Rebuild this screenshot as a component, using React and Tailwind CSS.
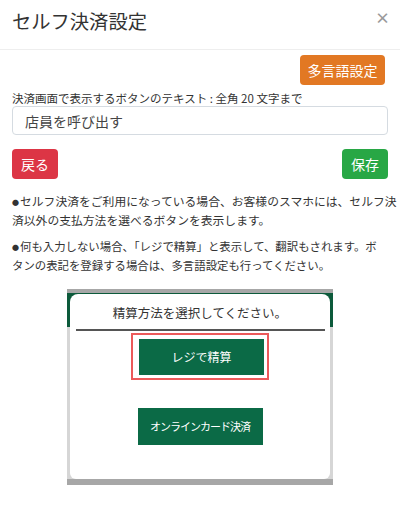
import React from 'react';

const font = { fontFamily: '"Noto Sans CJK JP", "Noto Sans", sans-serif' };

function Bullet() {
  return <span className="mr-[1px] inline-block align-[1px] text-[7px]">●</span>;
}

function PaymentPreview() {
  return (
    <div className="mx-auto mt-[15px] w-[266px] h-[196px] border-t-[4px] border-b-[6px] border-[#a7a7a7] bg-[linear-gradient(#0c5a3b_0_34px,#d6d6d6_34px)] px-[3px] pt-[1px]">
      <div className="h-full rounded-t-[8px] rounded-b-[6px] bg-white pt-[9px]">
        <p className="text-center text-[12.5px] leading-[20px] text-[#333]">精算方法を選択してください。</p>
        <div className="mt-[6px] ml-[6px] mr-[5px] h-[2px] bg-[#555]" />
        <div className="mx-auto mt-[2px] flex h-[47px] w-[138px] items-center justify-center border-2 border-[#ec5a5a] pl-[3px]">
          <div className="flex h-[36px] w-[125px] items-center justify-center bg-[#0b6a46] text-[12px] text-white">
            レジで精算
          </div>
        </div>
        <div className="mx-auto mt-[28px] flex h-[37px] w-[125px] items-center justify-center bg-[#0b6a46] text-[11px] tracking-[-1px] text-white">
          オンラインカード決済
        </div>
      </div>
    </div>
  );
}

export default function App() {
  return (
    <div className="w-[400px] h-[505px] overflow-hidden bg-white text-[#333]" style={font}>
      <div className="flex h-[50px] items-center justify-between border-b border-[#eeeeee] pl-3 pr-[10px]">
        <h1 className="text-[19.3px] leading-none -mt-[5px]">セルフ決済設定</h1>
        <span className="-mt-[12px] text-[15px] font-bold text-[#9a9a9a]">×</span>
      </div>

      <div className="px-3 pt-[5px]">
        <div className="flex justify-end">
          <button className="mr-[3px] h-[30px] w-[85px] rounded-[4px] bg-[#e27823] text-[14px] text-white">
            多言語設定
          </button>
        </div>

        <label className="mt-[5px] block text-[11.5px] leading-[16px] text-[#333]">
          決済画面で表示するボタンのテキスト : 全角 20 文字まで
        </label>
        <input
          className="block h-[29px] w-full rounded-[4px] border border-[#d5dbe1] px-3 text-[14px] text-[#444] outline-none"
          style={font}
          defaultValue="店員を呼び出す"
        />

        <div className="mt-[14px] flex justify-between">
          <button className="h-[30px] w-[46px] rounded-[4px] bg-[#dc3545] text-[14px] text-white">戻る</button>
          <button className="h-[30px] w-[46px] rounded-[4px] bg-[#28a745] text-[14px] text-white">保存</button>
        </div>

        <p className="mt-[13px] text-[11.8px] leading-[18px] text-[#333] whitespace-nowrap">
          <Bullet />セルフ決済をご利用になっている場合、お客様のスマホには、セルフ決
          <br />
          済以外の支払方法を選べるボタンを表示します。
        </p>
        <p className="mt-[8px] text-[11.4px] leading-[18px] text-[#333] whitespace-nowrap">
          <Bullet />何も入力しない場合、「レジで精算」と表示して、翻訳もされます。ボ
          <br />
          タンの表記を登録する場合は、多言語設定も行ってください。
        </p>

        <PaymentPreview />
      </div>
    </div>
  );
}
